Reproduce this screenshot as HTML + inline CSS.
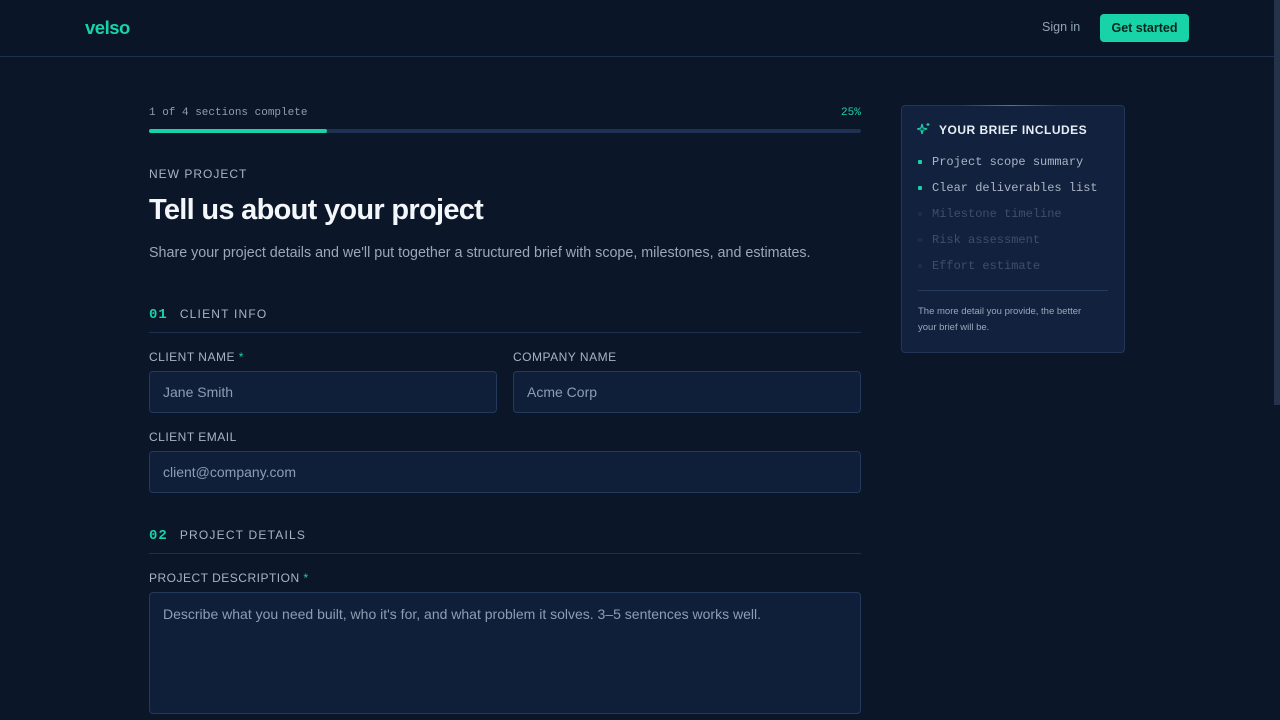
<!DOCTYPE html>
<html><head><meta charset="utf-8"><style>
*{box-sizing:border-box;margin:0;padding:0}
body{width:1280px;height:720px;overflow:hidden;background:#0b1628;font-family:"Liberation Sans",sans-serif;color:#e6edf5;position:relative}
.mono{font-family:"Liberation Mono",monospace}
.hdr{height:57px;border-bottom:1px solid #1d3050;position:relative;background:#0a1527}
.logo{position:absolute;left:85px;top:17px;font-size:18.5px;font-weight:bold;color:#19d3a8;letter-spacing:-0.5px}
.signin{position:absolute;left:1042px;top:20px;font-size:12.5px;color:#93a3b8}
.btn{position:absolute;left:1100px;top:14px;width:89px;height:28px;background:#19d3a8;border-radius:4px;color:#06251e;font-size:12.5px;font-weight:bold;text-align:center;line-height:28px}
.abs{position:absolute}
.lbl{font-size:12px;letter-spacing:0.5px;color:#a8b4c4}
.inp{position:absolute;background:#0f1f3a;border:1px solid #233a5c;border-radius:4px;font-size:14px;color:#8e9db2;padding-left:13px}
.ast{color:#19d3a8}
.sec{font-size:12px;letter-spacing:1.2px;color:#a8b4c4}
.num{color:#19d3a8;font-weight:bold;font-size:14px;letter-spacing:1px;margin-right:12px}
.li{position:absolute;left:932px;font-size:12px;color:#aab5c5}
.dot{position:absolute;left:918px;width:4px;height:4px;border-radius:1px;background:#19d3a8}
</style></head><body>
<div class="hdr"><div class="logo">velso</div><div class="signin">Sign in</div><div class="btn">Get started</div></div>
<div class="abs mono" style="left:149px;top:107px;font-size:11px;color:#8e9db2">1 of 4 sections complete</div>
<div class="abs mono" style="left:841px;top:107px;font-size:11px;color:#19d3a8">25%</div>
<div class="abs" style="left:149px;top:129px;width:712px;height:4px;background:#1f3152;border-radius:2px"></div>
<div class="abs" style="left:149px;top:129px;width:178px;height:4px;background:#19d3a8;border-radius:2px"></div>
<div class="abs lbl" style="left:149px;top:167px;letter-spacing:1px">NEW PROJECT</div>
<div class="abs" style="left:149px;top:194px;font-size:29px;font-weight:bold;letter-spacing:-0.7px;color:#f3f6fa">Tell us about your project</div>
<div class="abs" style="left:149px;top:245px;font-size:14.3px;color:#9aa8bb">Share your project details and we'll put together a structured brief with scope, milestones, and estimates.</div>
<div class="abs sec" style="left:149px;top:307px"><span class="num mono">01</span>CLIENT INFO</div>
<div class="abs" style="left:149px;top:332px;width:712px;height:1px;background:#1d3050"></div>
<div class="abs lbl" style="left:149px;top:350px">CLIENT NAME <span class="ast">*</span></div>
<div class="abs lbl" style="left:513px;top:350px">COMPANY NAME</div>
<div class="inp" style="left:149px;top:371px;width:348px;height:42px;line-height:41px">Jane Smith</div>
<div class="inp" style="left:513px;top:371px;width:348px;height:42px;line-height:41px">Acme Corp</div>
<div class="abs lbl" style="left:149px;top:430px">CLIENT EMAIL</div>
<div class="inp" style="left:149px;top:451px;width:712px;height:42px;line-height:41px">client@company.com</div>
<div class="abs sec" style="left:149px;top:528px"><span class="num mono">02</span>PROJECT DETAILS</div>
<div class="abs" style="left:149px;top:553px;width:712px;height:1px;background:#1d3050"></div>
<div class="abs lbl" style="left:149px;top:571px">PROJECT DESCRIPTION <span class="ast">*</span></div>
<div class="inp" style="left:149px;top:592px;width:712px;height:122px;padding-top:13px">Describe what you need built, who it's for, and what problem it solves. 3–5 sentences works well.</div>
<div class="abs" style="left:901px;top:105px;width:224px;height:248px;background:#12213d;border:1px solid #223659;border-radius:4px"></div>
<div class="abs" style="left:960px;top:105px;width:100px;height:1px;background:linear-gradient(90deg,transparent,#19d3a8,transparent);opacity:.6"></div>
<svg class="abs" style="left:917px;top:122px" width="14" height="14" viewBox="0 0 14 14" fill="none" stroke="#19d3a8" stroke-width="1.2"><path d="M5 2 L6 6 L10 7 L6 8 L5 12 L4 8 L0.5 7 L4 6 Z"/><path d="M11 1v3M9.5 2.5h3"/></svg>
<div class="abs" style="left:939px;top:123px;font-size:12px;font-weight:bold;letter-spacing:0.5px;color:#e8eef5">YOUR BRIEF INCLUDES</div>
<div class="dot" style="top:160px"></div><div class="li mono" style="top:155px">Project scope summary</div>
<div class="dot" style="top:186px"></div><div class="li mono" style="top:181px">Clear deliverables list</div>
<div class="dot" style="top:212px;background:#1c2d4a"></div><div class="li mono" style="top:207px;color:#3d4f6b">Milestone timeline</div>
<div class="dot" style="top:238px;background:#1c2d4a"></div><div class="li mono" style="top:233px;color:#3d4f6b">Risk assessment</div>
<div class="dot" style="top:264px;background:#1c2d4a"></div><div class="li mono" style="top:259px;color:#3d4f6b">Effort estimate</div>
<div class="abs" style="left:918px;top:290px;width:190px;height:1px;background:#263a5c"></div>
<div class="abs" style="left:918px;top:304px;font-size:9.5px;line-height:16px;color:#9aa8bb;width:180px">The more detail you provide, the better your brief will be.</div>
<div class="abs" style="left:1274px;top:0;width:6px;height:405px;background:#24334a"></div>
</body></html>
